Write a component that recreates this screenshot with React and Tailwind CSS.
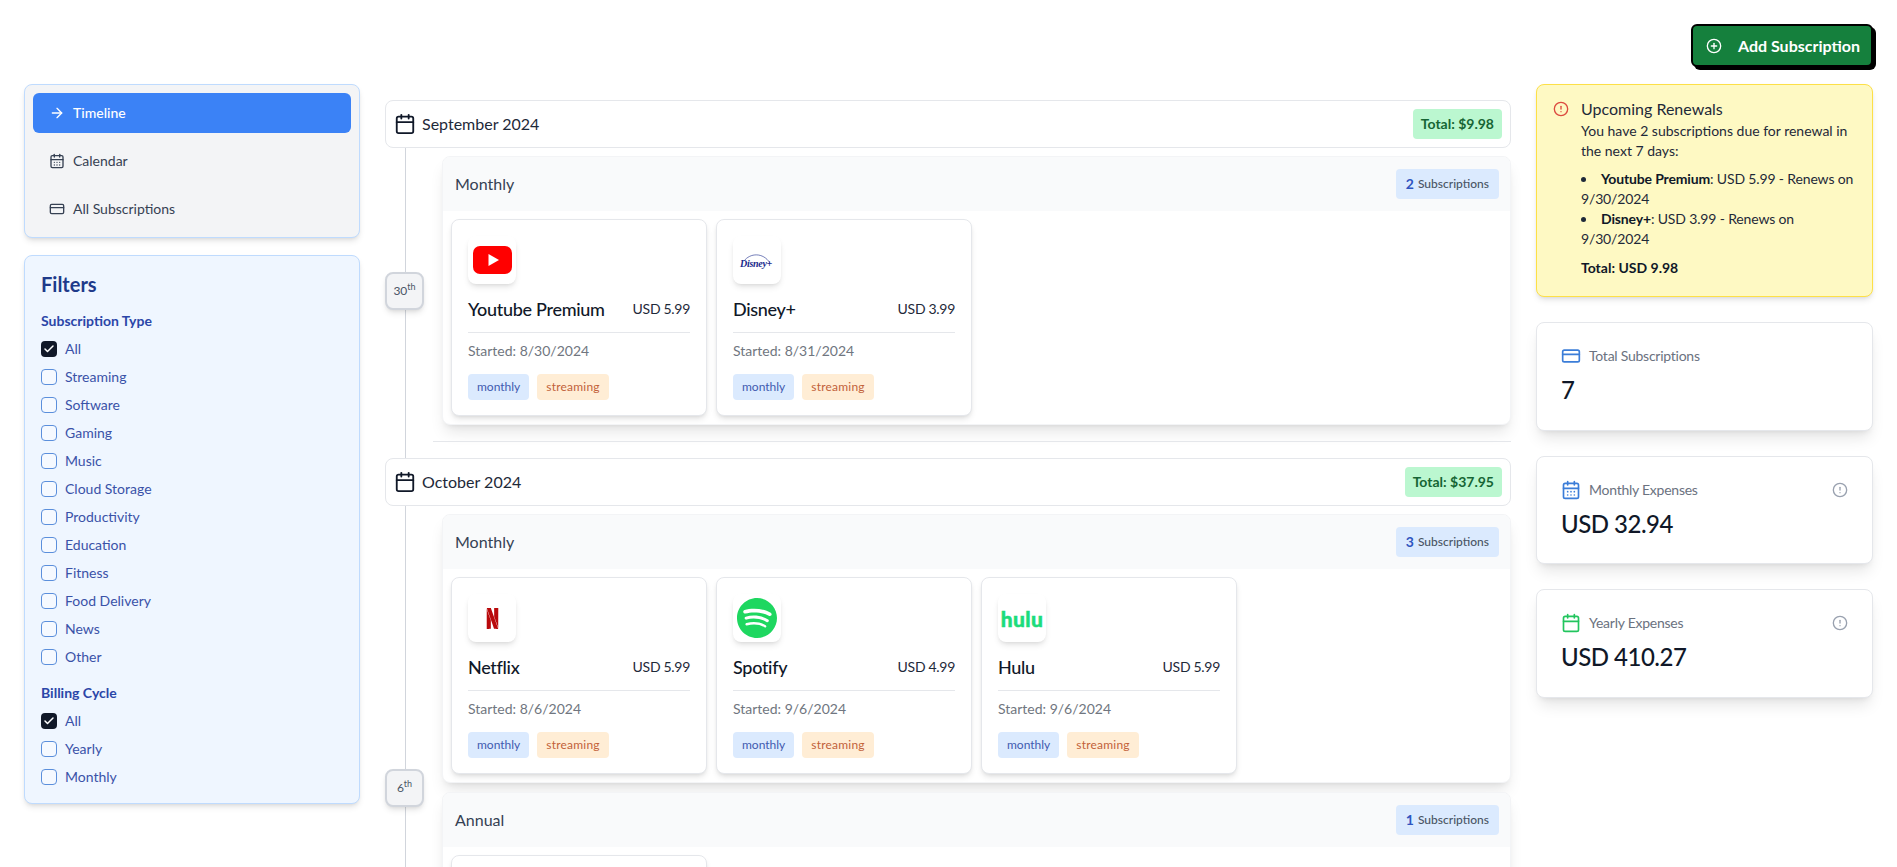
// App.jsx — subscription timeline dashboard
import { AlertCircle, ArrowRight, Calendar, CalendarDays, Check, CirclePlus, CreditCard } from 'lucide-react'
import { SiNetflix, SiSpotify } from 'react-icons/si'

const TYPES = ['All', 'Streaming', 'Software', 'Gaming', 'Music', 'Cloud Storage', 'Productivity', 'Education', 'Fitness', 'Food Delivery', 'News', 'Other']
const CYCLES = ['All', 'Yearly', 'Monthly']

// ── Logos ─────────────────────────────────────────────────────────────────────
function YoutubeLogo() {
  return (
    <svg width="39" height="28" viewBox="0 0 39 28">
      <rect width="39" height="28" rx="7" fill="#f00" />
      <polygon points="15.5,8 15.5,20 26,14" fill="#fff" />
    </svg>
  )
}

function DisneyLogo() {
  return (
    <div className="relative w-[34px] h-[20px] mt-1">
      <svg className="absolute inset-0" width="34" height="20" viewBox="0 0 34 20" fill="none">
        <path d="M4 9 C10 1 23 0 30 11" stroke="#1a2a8c" strokeWidth="0.6" />
      </svg>
      <span className="absolute left-0 top-[6px] font-['Liberation_Serif',serif] italic font-bold text-[10px] leading-3 text-[#1a2a8c] whitespace-nowrap tracking-[-0.3px]">
        Disney+
      </span>
    </div>
  )
}

const LOGOS = {
  youtube: <YoutubeLogo />,
  disney: <DisneyLogo />,
  netflix: <SiNetflix size={21} color="#b9090b" />,
  spotify: <SiSpotify size={40} color="#1ed760" />,
  hulu: <span className="text-[21px] leading-none font-black text-[#1cdc7c] tracking-[0.4px] [-webkit-text-stroke:0.5px_#1cdc7c]">hulu</span>,
}

// ── Timeline pieces ───────────────────────────────────────────────────────────
function MonthHeader({ title, total }) {
  return (
    <div className="relative z-10 h-[48px] flex items-center justify-between pl-2 pr-2 bg-white border border-gray-200 rounded-lg">
      <div className="flex items-center gap-[6px]">
        <Calendar size={22} className="text-gray-900" strokeWidth={2} />
        <span className="text-base text-gray-800">{title}</span>
      </div>
      <span className="h-[30px] flex items-center px-2 rounded bg-[#bbf7d0] text-[#166534] text-sm font-bold">
        Total: {total}
      </span>
    </div>
  )
}

function SubCard({ sub }) {
  return (
    <div className="h-[197px] bg-white border border-gray-200 rounded-lg shadow-md p-4">
      <div className="w-12 h-12 rounded-lg bg-white shadow-md flex items-center justify-center">
        {LOGOS[sub.logo]}
      </div>
      <div className="mt-[11px] flex items-center justify-between">
        <span className="text-lg leading-7 font-medium text-gray-900 tracking-[-0.3px]">{sub.name}</span>
        <span className="text-sm text-gray-800 tracking-[-0.3px]">USD {sub.price}</span>
      </div>
      <div className="mt-[9px] h-px bg-gray-200" />
      <p className="mt-2 text-sm text-[#707680]">Started: {sub.started}</p>
      <div className="mt-[13px] flex gap-2">
        <span className="h-[26px] flex items-center px-[9px] rounded bg-[#dbeafe] text-[#3f5bb0] text-xs">monthly</span>
        <span className="h-[26px] flex items-center px-[9px] rounded bg-[#ffedd5] text-[#c2613a] text-xs tracking-[0.2px]">streaming</span>
      </div>
    </div>
  )
}

function CycleGroup({ label, count, subs, children }) {
  return (
    <div className="bg-white border border-gray-100 rounded-lg shadow-lg overflow-hidden">
      <div className="h-[54px] flex items-center justify-between pl-3 pr-[11px] bg-gray-50">
        <span className="text-base text-gray-700">{label}</span>
        <span className="h-[30px] flex items-center gap-1 px-[10px] rounded bg-[#dbeafe]">
          <span className="text-sm font-bold text-[#2f55c0]">{count}</span>
          <span className="text-xs font-medium text-gray-600">Subscriptions</span>
        </span>
      </div>
      <div className="grid grid-cols-4 gap-[9px] p-2">
        {subs.map((s, i) => <SubCard key={i} sub={s} />)}
        {children}
      </div>
    </div>
  )
}

function DayBlock({ day, children }) {
  return (
    <div className="relative mt-2 ml-[57px] flex flex-col gap-[9px]">
      <div className="absolute z-10 left-[-57px] top-1/2 -translate-y-1/2 w-[39px] h-[38px] flex items-center justify-center bg-gray-100 border-2 border-gray-300 rounded-lg shadow-md text-xs text-gray-600">
        <span>{day}<sup className="text-[9px]">th</sup></span>
      </div>
      {children}
    </div>
  )
}

// ── Side columns ──────────────────────────────────────────────────────────────
function NavItem({ icon: Icon, label, active }) {
  return (
    <div className={`h-10 flex items-center gap-2 pl-4 rounded-md text-sm ${active ? 'bg-[#3b82f6] text-white font-medium' : 'text-gray-700'}`}>
      <Icon size={16} />
      <span>{label}</span>
    </div>
  )
}

function FilterRow({ label, checked }) {
  return (
    <div className="h-5 flex items-center gap-2 text-sm text-[#3a52a8]">
      {checked ? (
        <span className="w-4 h-4 rounded bg-gray-900 flex items-center justify-center">
          <Check size={12} strokeWidth={3} className="text-white" />
        </span>
      ) : (
        <span className="w-4 h-4 rounded border border-[#5b8fdc] bg-white/40" />
      )}
      <span>{label}</span>
    </div>
  )
}

function StatCard({ icon: Icon, iconClass, label, value, info }) {
  return (
    <div className="h-[108.5px] bg-white border border-gray-200 rounded-lg shadow-lg px-6 pt-[23px]">
      <div className="flex items-center justify-between">
        <div className="flex items-center gap-2">
          <Icon size={20} className={iconClass} />
          <span className="text-sm text-[#6b7280] tracking-[-0.25px]">{label}</span>
        </div>
        {info && <AlertCircle size={16} className="text-gray-400" />}
      </div>
      <p className="mt-2 text-2xl font-medium text-gray-900 tracking-[-0.5px]">{value}</p>
    </div>
  )
}

export default function App() {
  return (
    <div className="h-screen overflow-hidden bg-white px-6 pt-6 font-['Lato','Noto_Sans',sans-serif]">
      {/* ── Top action ──────────────────────────────────────────────────── */}
      <div className="flex justify-end">
        <button className="h-[43px] w-[182px] flex items-center gap-4 pl-[13px] bg-[#15803d] border-2 border-black rounded-md shadow-[3px_3px_0_0_#000] text-white text-base font-bold">
          <CirclePlus size={16} />
          <span>Add Subscription</span>
        </button>
      </div>

      <div className="mt-[17px] grid grid-cols-[336px_1fr_337px] gap-[25px] items-start">
        {/* ── Left column ───────────────────────────────────────────────── */}
        <div className="flex flex-col gap-[17px]">
          <nav className="p-2 flex flex-col gap-2 bg-gray-100 border border-[#bfdbfe] rounded-lg shadow-md">
            <NavItem icon={ArrowRight} label="Timeline" active />
            <NavItem icon={CalendarDays} label="Calendar" />
            <NavItem icon={CreditCard} label="All Subscriptions" />
          </nav>

          <div className="p-4 bg-[#eff6ff] border border-[#bfdbfe] rounded-lg shadow-md">
            <h2 className="text-xl leading-6 font-bold text-[#1e3a8a]">Filters</h2>
            <h3 className="mt-[15px] text-sm font-bold text-[#2b46a8]">Subscription Type</h3>
            <div className="mt-2 flex flex-col gap-2">
              {TYPES.map((t, i) => <FilterRow key={t} label={t} checked={i === 0} />)}
            </div>
            <h3 className="mt-4 text-sm font-bold text-[#2b46a8]">Billing Cycle</h3>
            <div className="mt-2 flex flex-col gap-2">
              {CYCLES.map((t, i) => <FilterRow key={t} label={t} checked={i === 0} />)}
            </div>
          </div>
        </div>

        {/* ── Timeline ──────────────────────────────────────────────────── */}
        <div className="relative pt-4">
          <div className="absolute left-5 top-4 bottom-0 w-px bg-gray-300" />

          <MonthHeader title="September 2024" total="$9.98" />
          <DayBlock day="30">
            <CycleGroup
              label="Monthly"
              count={2}
              subs={[
                { logo: 'youtube', name: 'Youtube Premium', price: '5.99', started: '8/30/2024' },
                { logo: 'disney', name: 'Disney+', price: '3.99', started: '8/31/2024' },
              ]}
            />
          </DayBlock>
          <div className="relative my-4 ml-12 h-px bg-gray-200" />

          <MonthHeader title="October 2024" total="$37.95" />
          <DayBlock day="6">
            <CycleGroup
              label="Monthly"
              count={3}
              subs={[
                { logo: 'netflix', name: 'Netflix', price: '5.99', started: '8/6/2024' },
                { logo: 'spotify', name: 'Spotify', price: '4.99', started: '9/6/2024' },
                { logo: 'hulu', name: 'Hulu', price: '5.99', started: '9/6/2024' },
              ]}
            />
            <CycleGroup label="Annual" count={1} subs={[]}>
              <div className="h-[197px] bg-white border border-gray-200 rounded-lg shadow-md" />
            </CycleGroup>
          </DayBlock>
        </div>

        {/* ── Right column ──────────────────────────────────────────────── */}
        <div className="flex flex-col gap-[25px]">
          <div className="h-[213px] flex gap-3 p-4 bg-[#fef9c3] border border-[#fde047] rounded-lg shadow-md">
            <AlertCircle size={16} className="shrink-0 text-[#dc4a3f]" />
            <div className="min-w-0">
              <p className="text-base leading-none text-gray-800 mb-1">Upcoming Renewals</p>
              <p className="text-sm leading-5 text-gray-800">You have 2 subscriptions due for renewal in the next 7 days:</p>
              <ul className="mt-2 list-disc list-inside text-sm leading-5 text-gray-800 tracking-[-0.15px]">
                <li><strong className="font-bold text-gray-900">Youtube Premium</strong>: USD 5.99 - Renews on 9/30/2024</li>
                <li><strong className="font-bold text-gray-900">Disney+</strong>: USD 3.99 - Renews on 9/30/2024</li>
              </ul>
              <p className="mt-[9px] text-sm font-bold text-gray-900">Total: USD 9.98</p>
            </div>
          </div>

          <StatCard icon={CreditCard} iconClass="text-[#3b7dd8]" label="Total Subscriptions" value="7" />
          <StatCard icon={CalendarDays} iconClass="text-[#3b7dd8]" label="Monthly Expenses" value="USD 32.94" info />
          <StatCard icon={Calendar} iconClass="text-[#22c55e]" label="Yearly Expenses" value="USD 410.27" info />
        </div>
      </div>
    </div>
  )
}
